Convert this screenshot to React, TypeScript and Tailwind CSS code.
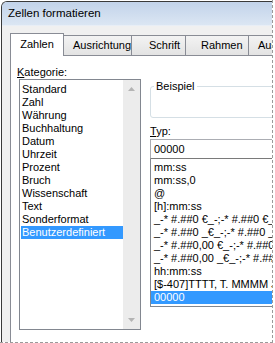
import React from "react";

const leftItems = [
  "Standard",
  "Zahl",
  "Währung",
  "Buchhaltung",
  "Datum",
  "Uhrzeit",
  "Prozent",
  "Bruch",
  "Wissenschaft",
  "Text",
  "Sonderformat",
  "Benutzerdefiniert",
];

const typeItems = [
  "mm:ss",
  "mm:ss,0",
  "@",
  "[h]:mm:ss",
  "_-* #.##0 €_-;-* #.##0 €_-;_-* \"-\" €_-;_-@_-",
  "_-* #.##0 _€_-;-* #.##0 _€_-;_-* \"-\" _€_-;_-@_-",
  "_-* #.##0,00 €_-;-* #.##0,00 €_-;_-* \"-\"?? €_-;_-@_-",
  "_-* #.##0,00 _€_-;-* #.##0,00 _€_-;_-* \"-\"?? _€_-;_-@_-",
  "hh:mm:ss",
  "[$-407]TTTT, T. MMMM JJJJ",
  "00000",
];

export default function App() {
  return (
    <div className="w-[275px] h-[343px] bg-white overflow-hidden font-['Liberation_Sans',Arial,sans-serif] text-[11px] text-black">
      <div className="w-[273px] h-[343px] border-r border-b border-dashed border-[#9a9a9a] overflow-hidden">
        <div className="mt-[1px] ml-[1px] w-[420px] h-[400px] border-l border-t border-[#3a3a3a] rounded-tl-[6px] bg-[#f0f0f0] flex flex-col">
          {/* Title bar */}
          <div className="h-[24px] shrink-0 bg-gradient-to-b from-[#c2d3ea] to-[#dbe6f3] rounded-tl-[5px] flex items-center pl-[6px] border-b border-[#e8eef6]">
            <span className="text-[11.5px] leading-none pt-[1px]">Zellen formatieren</span>
          </div>
          {/* Client */}
          <div className="flex-1 pt-[7px] pl-[8px] flex flex-col">
            {/* Tabs */}
            <div className="flex items-end h-[22px] relative z-10">
              <div className="w-[54px] h-[23px] -mb-[1px] bg-white border-l border-t border-r border-[#898c95] flex items-center justify-center">
                <span className="-mt-[1px]">Zahlen</span>
              </div>
              <div className="w-[69px] h-[20px] -ml-px bg-gradient-to-b from-[#f3f3f3] to-[#e3e3e3] border border-b-0 border-[#898c95] flex items-center pl-[9px]">
                <span>Ausrichtung</span>
              </div>
              <div className="w-[55px] h-[20px] -ml-px bg-gradient-to-b from-[#f3f3f3] to-[#e3e3e3] border border-b-0 border-[#898c95] flex items-center pl-[17px]">
                <span>Schrift</span>
              </div>
              <div className="w-[64px] h-[20px] -ml-px bg-gradient-to-b from-[#f3f3f3] to-[#e3e3e3] border border-b-0 border-[#898c95] flex items-center pl-[15px]">
                <span>Rahmen</span>
              </div>
              <div className="w-[70px] h-[20px] -ml-px bg-gradient-to-b from-[#f3f3f3] to-[#e3e3e3] border border-b-0 border-[#898c95] flex items-center pl-[9px]">
                <span>Ausfüllen</span>
              </div>
            </div>
            {/* Tab page */}
            <div className="flex-1 bg-white border-l border-t border-[#898c95] flex pl-[8px] pt-[9px]">
              {/* Left column */}
              <div className="flex flex-col w-[122px]">
                <div className="h-[14px] leading-[14px] -ml-[2px]">
                  <span className="underline">K</span>ategorie:
                </div>
                <div className="h-[251px] border border-[#828790] flex">
                  <div className="flex-1 pt-[3px] pl-[1px]">
                    {leftItems.map((t) => (
                      <div
                        key={t}
                        className={
                          t === "Benutzerdefiniert"
                            ? "h-[13px] leading-[13px] pl-[1px] bg-[#3399ff] text-white"
                            : "h-[13px] leading-[13px] pl-[1px]"
                        }
                      >
                        {t}
                      </div>
                    ))}
                  </div>
                  <div className="w-[17px] bg-[#ececec] flex flex-col items-center justify-between py-[7px]">
                    <svg width="7" height="4" viewBox="0 0 7 4">
                      <path d="M0 4 L3.5 0 L7 4 Z" fill="#b4b4b4" />
                    </svg>
                    <svg width="7" height="4" viewBox="0 0 7 4">
                      <path d="M0 0 L3.5 4 L7 0 Z" fill="#b4b4b4" />
                    </svg>
                  </div>
                </div>
              </div>
              {/* Right column */}
              <div className="ml-[9px] flex flex-col w-[260px]">
                <div className="mt-[21px] h-[32px] border border-[#d5dfe5] rounded-[3px] relative">
                  <span className="absolute -top-[8px] left-[3px] bg-white px-[2px] leading-[14px]">Beispiel</span>
                </div>
                <div className="mt-[6px] h-[14px] leading-[14px]">
                  <span className="underline">T</span>yp:
                </div>
                <div className="mt-[1px] h-[20px] border border-[#abadb3] border-b-[#7a7a7a] flex items-center pl-[3px]">
                  00000
                </div>
                <div className="h-[148px] border border-t-0 border-[#828790] pt-[2px] overflow-hidden">
                  {typeItems.map((t) => (
                    <div
                      key={t}
                      className={
                        t === "00000"
                          ? "h-[13px] leading-[13px] pl-[3px] whitespace-pre bg-[#3399ff] text-white"
                          : "h-[13px] leading-[13px] pl-[3px] whitespace-pre"
                      }
                    >
                      {t}
                    </div>
                  ))}
                </div>
              </div>
            </div>
          </div>
        </div>
      </div>
    </div>
  );
}
